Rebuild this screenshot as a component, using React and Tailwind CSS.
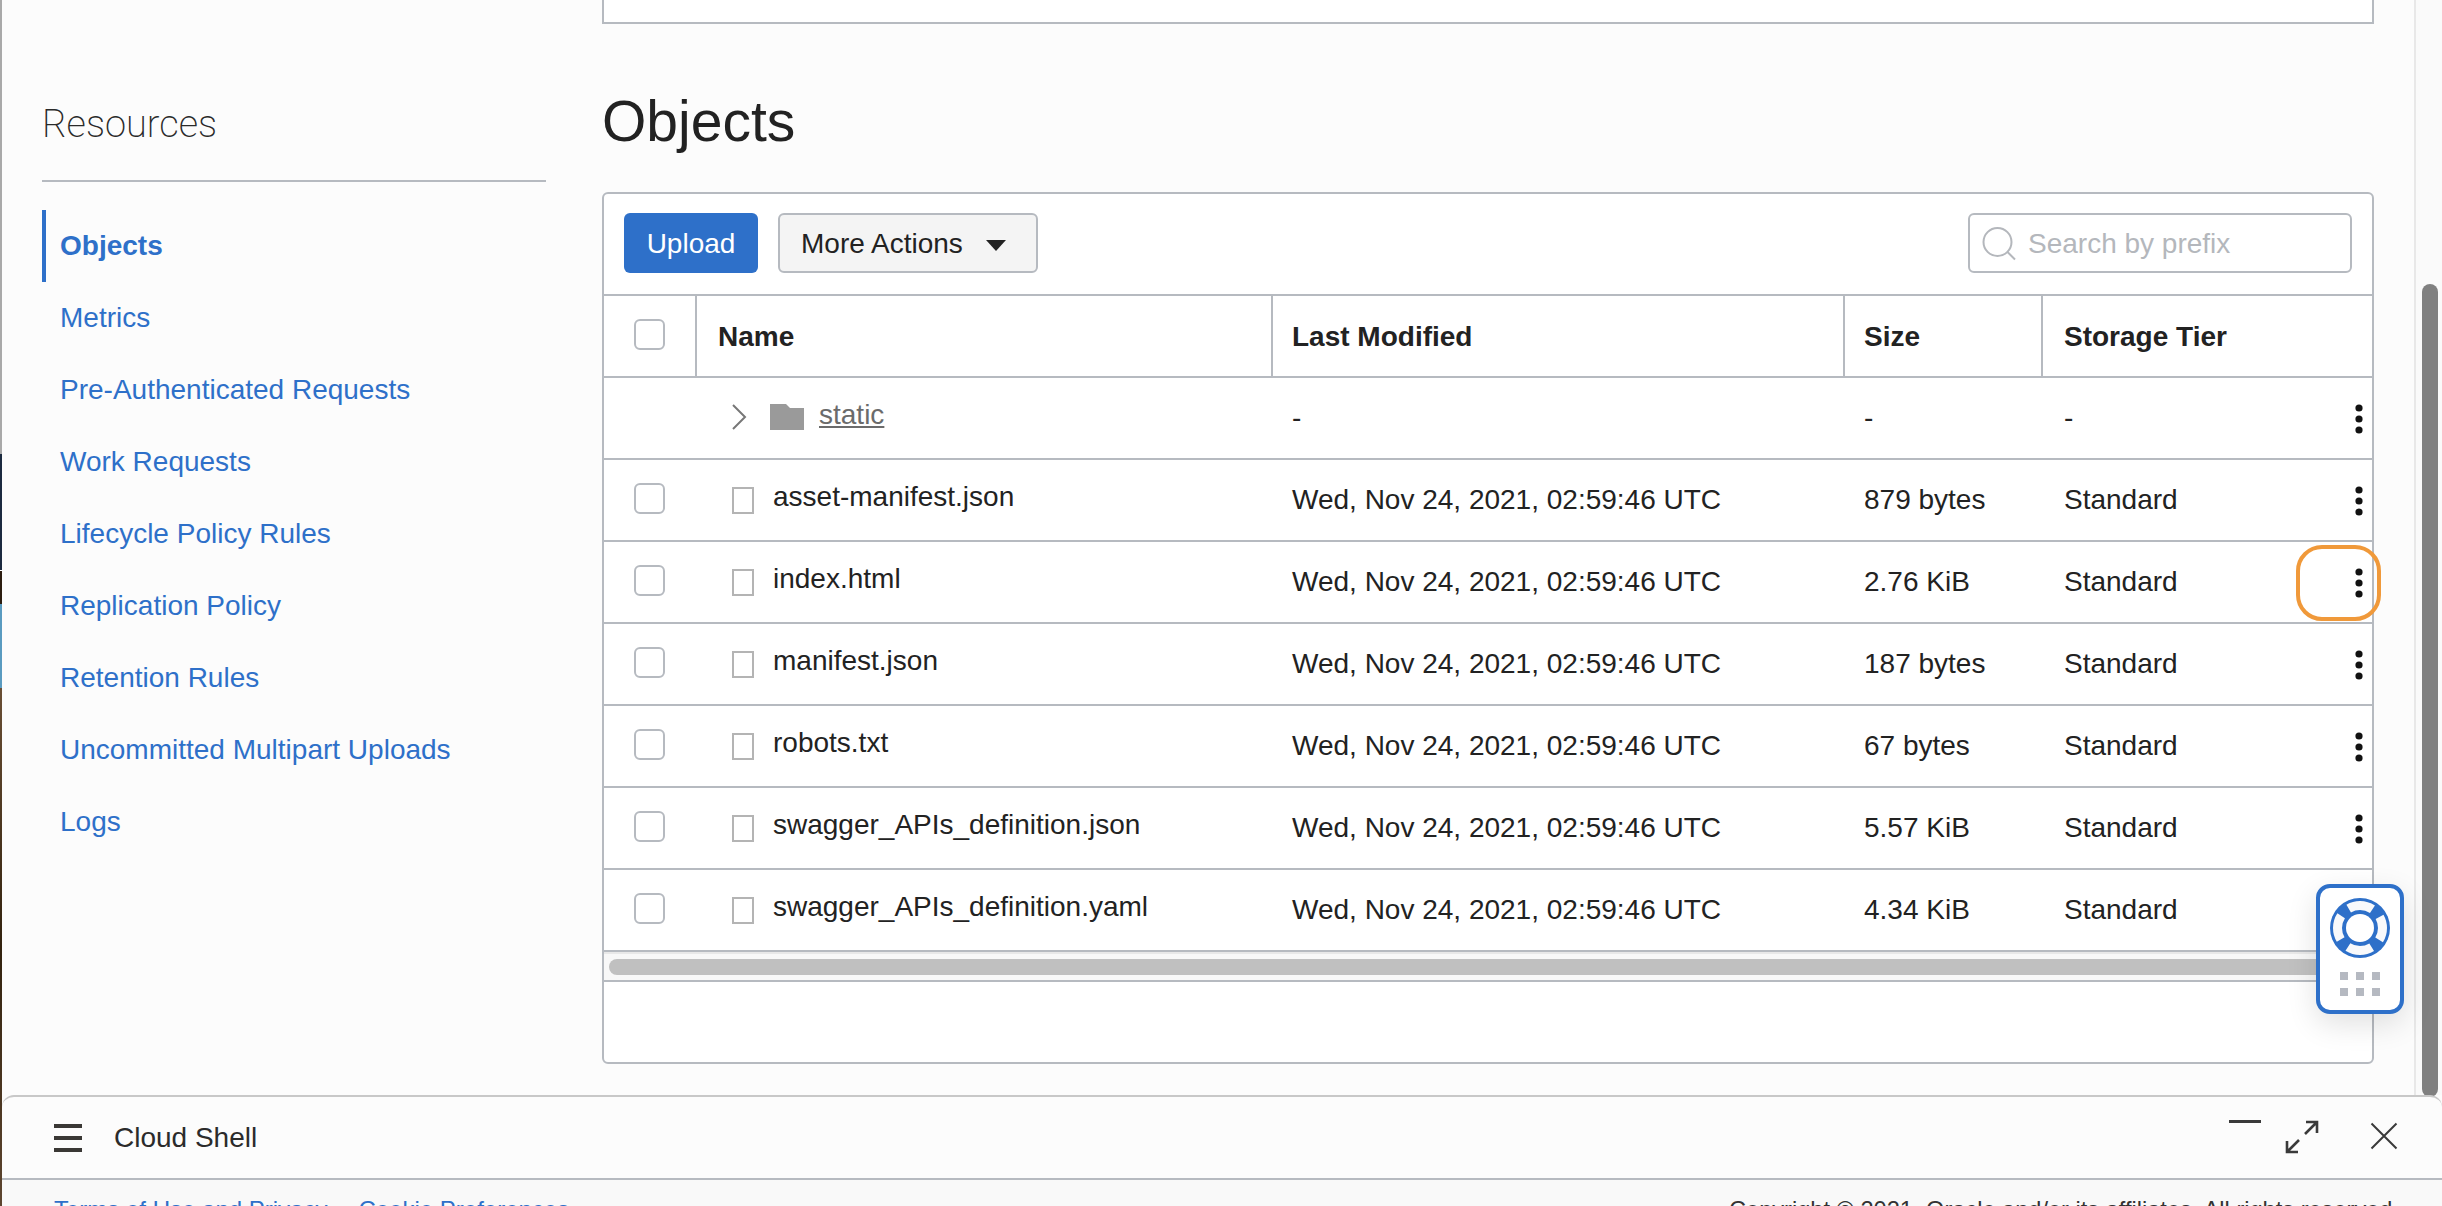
const nav = ["Metrics","Pre-Authenticated Requests","Work Requests","Lifecycle Policy Rules","Replication Policy","Retention Rules","Uncommitted Multipart Uploads","Logs"];
const files = [
  ["asset-manifest.json","879 bytes"],
  ["index.html","2.76 KiB"],
  ["manifest.json","187 bytes"],
  ["robots.txt","67 bytes"],
  ["swagger_APIs_definition.json","5.57 KiB"],
  ["swagger_APIs_definition.yaml","4.34 KiB"],
];
const cols = "grid grid-cols-[93px_576px_572px_198px_1fr] h-[82px] border-b-2 border-[#b6bac0] items-center text-[28px] leading-[34px] text-[#222222]";
const date = "Wed, Nov 24, 2021, 02:59:46 UTC";

function Check() {
  return <div className="ml-[30px] w-[31px] h-[31px] rounded-[6px] border-2 border-[#b6bac0] bg-white" />;
}
function Kebab() {
  return (
    <svg width="8" height="30" viewBox="0 0 8 30" className="shrink-0 mt-[1px]">
      <circle cx="4" cy="4" r="3.6" fill="#111" />
      <circle cx="4" cy="15" r="3.6" fill="#111" />
      <circle cx="4" cy="26" r="3.6" fill="#111" />
    </svg>
  );
}
function LastCell({ text, focus, hideKebab }) {
  return (
    <div className="relative flex items-center justify-between h-full pl-[21px] pr-[9px]">
      <span>{text}</span>
      {!hideKebab && <Kebab />}
      {focus && <div className="absolute right-[-9px] top-[3px] w-[85px] h-[76px] rounded-[26px] border-4 border-[#f0993a]" />}
    </div>
  );
}
function Lifebuoy() {
  const c = 30;
  return (
    <svg width="60" height="60" viewBox="0 0 60 60">
      <circle cx={c} cy={c} r="30" fill="#2e70c9" />
      <circle cx={c} cy={c} r="22.5" fill="none" stroke="#f8f9fb" strokeWidth="9" strokeDasharray="25 10.34" strokeDashoffset="12.5" />
      <circle cx={c} cy={c} r="14" fill="#fff" />
    </svg>
  );
}

export default function App() {
  return (
    <div className="relative flex w-[2442px] h-[1206px] overflow-hidden bg-[#fcfcfc] font-['Liberation_Sans',Arial,sans-serif]">
      <div className="flex flex-col w-[2px] shrink-0">
        <div className="h-[454px] bg-[#a9a9a9]" />
        <div className="h-[116px] bg-[#1c2a40]" />
        <div className="h-[1px] bg-white" />
        <div className="h-[33px] bg-[#2c1d10]" />
        <div className="h-[84px] bg-[#5a9bc0]" />
        <div className="flex-1 bg-gradient-to-b from-[#6a4f35] via-[#33230f] to-[#5e4630]" />
      </div>

      <div className="flex flex-col flex-1 min-w-0">
        <div className="flex h-[1095px] shrink-0">
          <aside className="w-[600px] shrink-0 pl-[40px] pr-[56px] pt-[100px]">
            <h2 className="text-[38px] leading-[48px] font-extralight font-['Roboto',sans-serif] text-[#2a2a2a] pb-[32px] border-b-2 border-[#b6bac0]">Resources</h2>
            <nav className="mt-[28px] text-[28px] text-[#2e70c9]">
              <div className="h-[72px] flex items-center border-l-4 border-[#2e70c9] pl-[14px] font-bold">Objects</div>
              {nav.map(n => <div key={n} className="h-[72px] flex items-center pl-[18px]">{n}</div>)}
            </nav>
          </aside>

          <main className="w-[1772px] shrink-0">
            <div className="h-[24px] bg-white border-2 border-t-0 border-[#b6bac0]" />
            <h1 className="mt-[64px] text-[57px] leading-[66px] text-[#222222]">Objects</h1>
            <section className="mt-[38px] h-[872px] bg-white border-2 border-[#b6bac0] rounded-[6px]">
              <div className="flex items-center justify-between h-[102px] border-b-2 border-[#b6bac0] pl-[20px] pr-[20px] pb-[3px]">
                <div className="flex items-center gap-[20px] text-[28px]">
                  <button className="w-[134px] h-[60px] pt-[2px] rounded-[6px] bg-[#2e70c9] text-white">Upload</button>
                  <button className="flex items-center w-[260px] h-[60px] pl-[21px] pt-[2px] rounded-[6px] border-2 border-[#b6bac0] bg-[#f4f4f4] text-[#222222]">
                    More Actions
                    <svg width="20" height="11" viewBox="0 0 20 11" className="ml-[23px] mt-[3px]"><path d="M0 0H20L10 11Z" fill="#222" /></svg>
                  </button>
                </div>
                <div className="flex items-center w-[384px] h-[60px] pl-[12px] pt-[2px] rounded-[6px] border-2 border-[#b6bac0] bg-white text-[28px] text-[#b4b7bc]">
                  <svg width="34" height="34" viewBox="0 0 34 34" className="shrink-0" fill="none" stroke="#b4b7bc" strokeWidth="2">
                    <circle cx="15.5" cy="15" r="14" />
                    <path d="M25.5 25L33 32.5" />
                  </svg>
                  <span className="ml-[12px]">Search by prefix</span>
                </div>
              </div>

              <div className={cols}>
                <div className="h-full flex items-center pb-[3px] border-r-2 border-[#b6bac0]"><Check /></div>
                <div className="h-full flex items-center pl-[21px] pt-[1px] border-r-2 border-[#b6bac0] font-bold">Name</div>
                <div className="h-full flex items-center pl-[19px] pt-[1px] border-r-2 border-[#b6bac0] font-bold">Last Modified</div>
                <div className="h-full flex items-center pl-[19px] pt-[1px] border-r-2 border-[#b6bac0] font-bold">Size</div>
                <div className="h-full flex items-center pl-[21px] pt-[1px] font-bold">Storage Tier</div>
              </div>

              <div className={cols}>
                <div />
                <div className="flex items-center pl-[34px] text-[#6b6b6b] pb-[2px]">
                  <svg width="16" height="26" viewBox="0 0 16 26" fill="none" stroke="#777" strokeWidth="2"><path d="M2 1L14 13L2 25" /></svg>
                  <svg width="34" height="26" viewBox="0 0 34 26" className="ml-[23px]"><path d="M0 0H16L20 4H34V26H0Z" fill="#9a9a9a" /></svg>
                  <span className="ml-[15px] underline pb-[4px]">static</span>
                </div>
                <div className="pl-[19px]">-</div>
                <div className="pl-[19px]">-</div>
                <LastCell text="-" />
              </div>

              {files.map(([name, size], i) => (
                <div key={name} className={cols}>
                  <div className="pb-[3px]"><Check /></div>
                  <div className="flex items-center pl-[35px]">
                    <div className="w-[22px] h-[27px] border-2 border-[#b4b4b4] bg-white" />
                    <span className="ml-[19px] pb-[7px]">{name}</span>
                  </div>
                  <div className="pl-[19px]">{date}</div>
                  <div className="pl-[19px]">{size}</div>
                  <LastCell text="Standard" focus={i === 1} hideKebab={i === 5} />
                </div>
              ))}

              <div className="h-[30px] bg-[#f8f8f8] border-t-2 border-b-2 border-t-[#e8e8e8] border-b-[#b6bac0] pt-[5px] pl-[5px] pr-[5px]">
                <div className="h-[16px] rounded-full bg-[#c0c0c0]" />
              </div>
            </section>
          </main>

          <div className="ml-[40px] flex-1 border-l-2 border-[#e8e8e8] bg-[#fafafa] pt-[284px] pl-[6px] pr-[4px]">
            <div className="h-[813px] w-[16px] rounded-full bg-[#808080]" />
          </div>
        </div>

        <div className="relative z-10 flex items-center justify-between h-[85px] shrink-0 bg-[#fcfcfc] border-t-2 border-t-[#c8c8c8] border-b-2 border-b-[#b6bac0] rounded-tl-[12px] rounded-tr-[12px] pl-[52px] pr-[44px]">
          <div className="flex items-center">
            <div className="flex flex-col gap-[8px] w-[28px]">
              <div className="h-[4px] bg-[#3a3835]" />
              <div className="h-[4px] bg-[#3a3835]" />
              <div className="h-[4px] bg-[#3a3835]" />
            </div>
            <span className="ml-[32px] text-[28px] text-[#2b2b2b]">Cloud Shell</span>
          </div>
          <div className="flex items-start mt-[-2px]">
            <svg width="32" height="3" viewBox="0 0 32 3" className="mb-[30px]"><rect width="32" height="3" fill="#3a3a3a" /></svg>
            <svg width="34" height="34" viewBox="0 0 34 34" className="ml-[24px]" fill="none" stroke="#3a3a3a" strokeWidth="2.6">
              <path d="M21 2H32V13M32 2L20 14M14 20L2 32M2 21V32H13" />
            </svg>
            <svg width="28" height="28" viewBox="0 0 28 28" className="ml-[51px] mt-[2px]" fill="none" stroke="#3a3a3a" strokeWidth="2">
              <path d="M1.5 1.5L26.5 26.5M26.5 1.5L1.5 26.5" />
            </svg>
          </div>
        </div>

        <footer className="flex justify-between h-[26px] shrink-0 overflow-hidden bg-[#f9f9f9] pl-[52px] pr-[43px] pt-[16px] text-[24px] leading-[28px] whitespace-nowrap">
          <div className="text-[#2e70c9]">
            <span>Terms of Use and Privacy</span>
            <span className="ml-[31px]">Cookie Preferences</span>
          </div>
          <div className="text-[#333333] text-[23.6px]">Copyright © 2021, Oracle and/or its affiliates. All rights reserved.</div>
        </footer>
      </div>

      <div className="absolute left-[2316px] top-[884px] z-20 flex flex-col items-center w-[88px] h-[130px] pt-[10px] bg-white border-4 border-[#2e70c9] rounded-[14px] shadow-[0_10px_30px_rgba(0,0,0,0.12)]">
        <Lifebuoy />
        <div className="grid grid-cols-3 gap-[8px] mt-[14px]">
          {[0,1,2,3,4,5].map(i => <div key={i} className="w-[8px] h-[8px] bg-[#b5b9c1]" />)}
        </div>
      </div>
    </div>
  );
}
